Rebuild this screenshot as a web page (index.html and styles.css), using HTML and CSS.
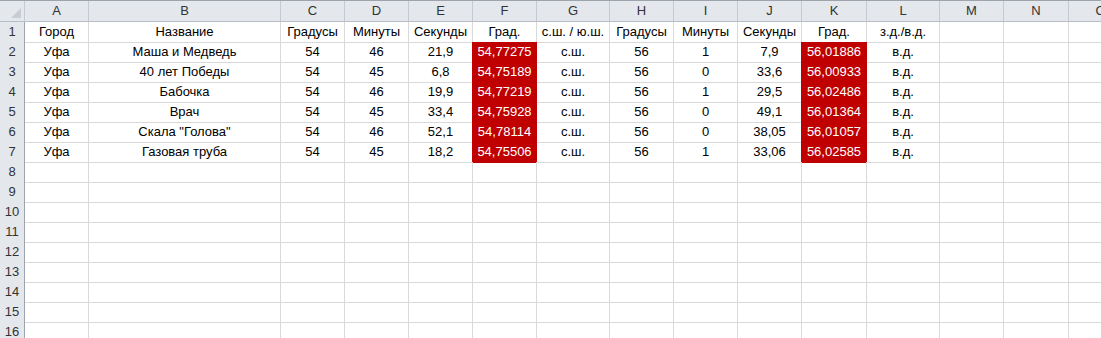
FILE: index.html
```
<!DOCTYPE html>
<html lang="ru">
<head>
  <meta charset="UTF-8">
  <title>Координаты</title>
  <link rel="stylesheet" href="styles.css">
</head>
<body>
<div class="sheet" id="sheet"></div>

<script>
  // Буквы столбцов
  const letters = ['A','B','C','D','E','F','G','H','I','J','K','L','M','N','O'];

  // Данные таблицы
  const rows = [
    ['Город','Название','Градусы','Минуты','Секунды','Град.','с.ш. / ю.ш.','Градусы','Минуты','Секунды','Град.','з.д./в.д.'],
    ['Уфа','Маша и Медведь','54','46','21,9','54,77275','с.ш.','56','1','7,9','56,01886','в.д.'],
    ['Уфа','40 лет Победы','54','45','6,8','54,75189','с.ш.','56','0','33,6','56,00933','в.д.'],
    ['Уфа','Бабочка','54','46','19,9','54,77219','с.ш.','56','1','29,5','56,02486','в.д.'],
    ['Уфа','Врач','54','45','33,4','54,75928','с.ш.','56','0','49,1','56,01364','в.д.'],
    ['Уфа','Скала "Голова"','54','46','52,1','54,78114','с.ш.','56','0','38,05','56,01057','в.д.'],
    ['Уфа','Газовая труба','54','45','18,2','54,75506','с.ш.','56','1','33,06','56,02585','в.д.']
  ];

  const sheet = document.getElementById('sheet');

  // Строка заголовков столбцов
  let head = '<div class="row head"><div class="corner"></div>';
  letters.forEach(l => head += '<div class="col">' + l + '</div>');
  head += '</div>';

  let html = head;
  for (let r = 1; r <= 16; r++) {
    const data = rows[r - 1] || [];
    html += '<div class="row"><div class="num">' + r + '</div>';
    for (let c = 0; c < letters.length; c++) {
      const value = data[c] || '';
      // Столбцы F и K с красной заливкой (строки 2-7)
      const red = (c === 5 || c === 10) && r > 1 && r <= 7;
      html += '<div class="cell' + (red ? ' red' : '') + '">' + value + '</div>';
    }
    html += '</div>';
  }
  sheet.innerHTML = html;
</script>
</body>
</html>
```

FILE: styles.css
```
body {
  margin: 0;
  background: #fff;
  font-family: "Liberation Sans", Arial, sans-serif;
  font-size: 13px;
  color: #000;
  overflow: hidden;
}
.sheet {
  width: 1101px;
  overflow: hidden;
}
.row {
  display: grid;
  grid-template-columns: 25px 64px 192px 64px 64px 64px 64px 73px 64px 64px 64px 65px 73px 64px 65px 64px;
  height: 20px;
}
.row.head {
  height: 22px;
  background: #e4e7ec;
  border-top: 1px solid #9ea4ac;
  box-sizing: border-box;
}
.corner {
  position: relative;
  border-right: 1px solid #c5cad1;
  border-bottom: 1px solid #b7bdc5;
}
.corner::after {
  content: "";
  position: absolute;
  right: 3px;
  bottom: 3px;
  border-style: solid;
  border-width: 0 0 10px 10px;
  border-color: transparent transparent #c9cdd3 transparent;
}
.col {
  border-right: 1px solid #c5cad1;
  border-bottom: 1px solid #b7bdc5;
  text-align: center;
  line-height: 20px;
  color: #333;
}
.num {
  background: #e4e7ec;
  border-right: 1px solid #9ea4ac;
  border-bottom: 1px solid #cfd4da;
  text-align: center;
  line-height: 20px;
  color: #333;
}
.cell {
  border-right: 1px solid #d9d9d9;
  border-bottom: 1px solid #d9d9d9;
  text-align: center;
  line-height: 20px;
  white-space: nowrap;
  overflow: hidden;
}
.cell.red {
  background: #c00000;
  color: #fff;
  border-color: #c00000;
  box-shadow: -1px 0 0 #c00000;
}
```
